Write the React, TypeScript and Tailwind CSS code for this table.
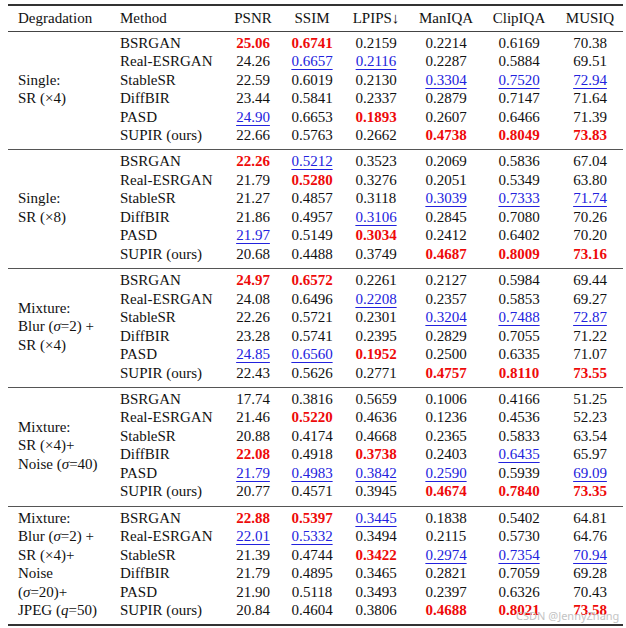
import React from "react";

type Cell = string; // suffix "r" = best (red bold), "b" = second (blue underline)

type Group = {
  label: string[];
  stacked?: boolean; // label lines sit beside each row instead of centred
  rows: [string, ...Cell[]][];
};

const groups: Group[] = [
  {
    label: ["Single:", "SR (×4)"],
    rows: [
      ["BSRGAN", "25.06r", "0.6741r", "0.2159", "0.2214", "0.6169", "70.38"],
      ["Real-ESRGAN", "24.26", "0.6657b", "0.2116b", "0.2287", "0.5884", "69.51"],
      ["StableSR", "22.59", "0.6019", "0.2130", "0.3304b", "0.7520b", "72.94b"],
      ["DiffBIR", "23.44", "0.5841", "0.2337", "0.2879", "0.7147", "71.64"],
      ["PASD", "24.90b", "0.6653", "0.1893r", "0.2607", "0.6466", "71.39"],
      ["SUPIR (ours)", "22.66", "0.5763", "0.2662", "0.4738r", "0.8049r", "73.83r"],
    ],
  },
  {
    label: ["Single:", "SR (×8)"],
    rows: [
      ["BSRGAN", "22.26r", "0.5212b", "0.3523", "0.2069", "0.5836", "67.04"],
      ["Real-ESRGAN", "21.79", "0.5280r", "0.3276", "0.2051", "0.5349", "63.80"],
      ["StableSR", "21.27", "0.4857", "0.3118", "0.3039b", "0.7333b", "71.74b"],
      ["DiffBIR", "21.86", "0.4957", "0.3106b", "0.2845", "0.7080", "70.26"],
      ["PASD", "21.97b", "0.5149", "0.3034r", "0.2412", "0.6402", "70.20"],
      ["SUPIR (ours)", "20.68", "0.4488", "0.3749", "0.4687r", "0.8009r", "73.16r"],
    ],
  },
  {
    label: ["Mixture:", "Blur (σ=2) +", "SR (×4)"],
    rows: [
      ["BSRGAN", "24.97r", "0.6572r", "0.2261", "0.2127", "0.5984", "69.44"],
      ["Real-ESRGAN", "24.08", "0.6496", "0.2208b", "0.2357", "0.5853", "69.27"],
      ["StableSR", "22.26", "0.5721", "0.2301", "0.3204b", "0.7488b", "72.87b"],
      ["DiffBIR", "23.28", "0.5741", "0.2395", "0.2829", "0.7055", "71.22"],
      ["PASD", "24.85b", "0.6560b", "0.1952r", "0.2500", "0.6335", "71.07"],
      ["SUPIR (ours)", "22.43", "0.5626", "0.2771", "0.4757r", "0.8110r", "73.55r"],
    ],
  },
  {
    label: ["Mixture:", "SR (×4)+", "Noise (σ=40)"],
    rows: [
      ["BSRGAN", "17.74", "0.3816", "0.5659", "0.1006", "0.4166", "51.25"],
      ["Real-ESRGAN", "21.46", "0.5220r", "0.4636", "0.1236", "0.4536", "52.23"],
      ["StableSR", "20.88", "0.4174", "0.4668", "0.2365", "0.5833", "63.54"],
      ["DiffBIR", "22.08r", "0.4918", "0.3738r", "0.2403", "0.6435b", "65.97"],
      ["PASD", "21.79b", "0.4983b", "0.3842b", "0.2590b", "0.5939", "69.09b"],
      ["SUPIR (ours)", "20.77", "0.4571", "0.3945", "0.4674r", "0.7840r", "73.35r"],
    ],
  },
  {
    label: ["Mixture:", "Blur (σ=2) +", "SR (×4)+", "Noise", "(σ=20)+", "JPEG (q=50)"],
    stacked: true,
    rows: [
      ["BSRGAN", "22.88r", "0.5397r", "0.3445b", "0.1838", "0.5402", "64.81"],
      ["Real-ESRGAN", "22.01b", "0.5332b", "0.3494", "0.2115", "0.5730", "64.76"],
      ["StableSR", "21.39", "0.4744", "0.3422r", "0.2974b", "0.7354b", "70.94b"],
      ["DiffBIR", "21.79", "0.4895", "0.3465", "0.2821", "0.7059", "69.28"],
      ["PASD", "21.90", "0.5118", "0.3493", "0.2397", "0.6326", "70.43"],
      ["SUPIR (ours)", "20.84", "0.4604", "0.3806", "0.4688r", "0.8021r", "73.58r"],
    ],
  },
];

const cols = "grid grid-cols-[102px_113px_60px_58px_70px_70px_76px_66px]";

// σ and q are set in italic, like math in the paper
function Label({ text }: { text: string }) {
  const parts = text.split(/(σ|q(?==))/);
  return (
    <>
      {parts.map((p, i) =>
        p === "σ" || p === "q" ? (
          <i key={i}>{p}</i>
        ) : (
          <span key={i}>{p}</span>
        )
      )}
    </>
  );
}

function Value({ v }: { v: string }) {
  const mark = v.slice(-1);
  if (mark === "r") return <span className="font-bold text-[#ee0a0a]">{v.slice(0, -1)}</span>;
  if (mark === "b")
    return (
      <span className="text-[#2222dd] underline decoration-1 underline-offset-[3px]">
        {v.slice(0, -1)}
      </span>
    );
  return <span>{v}</span>;
}

export default function App() {
  return (
    <div className="relative w-[626px] h-[628px] bg-white pt-[4px] pl-[8px] font-['Liberation_Serif','Times_New_Roman',serif] text-[15px] text-[#111]">
      <div className="w-[615px]">
        <div className="h-[1.5px] bg-[#333]" />
        <div className={`${cols} h-[25px] items-center`}>
          <div className="pl-[10px]">Degradation</div>
          <div className="pl-[10px]">Method</div>
          <div className="text-center">PSNR</div>
          <div className="text-center">SSIM</div>
          <div className="text-center">LPIPS↓</div>
          <div className="text-center">ManIQA</div>
          <div className="text-center">ClipIQA</div>
          <div className="text-center">MUSIQ</div>
        </div>

        {groups.map((g, gi) => (
          <div key={gi}>
            <div className={gi === 0 ? "h-px bg-[#444]" : "h-px bg-[#555]"} />
            <div className={`${cols} auto-rows-[18.5px] pt-[2px] pb-[4.8px] leading-[18.5px]`}>
              <div
                className={`row-span-6 pl-[10px] flex flex-col ${
                  g.stacked ? "justify-start" : "justify-center"
                }`}
              >
                {g.label.map((l) => (
                  <div key={l} className="h-[18.5px] whitespace-nowrap">
                    <Label text={l} />
                  </div>
                ))}
              </div>
              {g.rows.map((r) => (
                <React.Fragment key={r[0]}>
                  <div className="pl-[10px] whitespace-nowrap">{r[0]}</div>
                  {r.slice(1).map((v, i) => (
                    <div key={i} className="text-center">
                      <Value v={v} />
                    </div>
                  ))}
                </React.Fragment>
              ))}
            </div>
          </div>
        ))}
        <div className="h-[1.5px] bg-[#333]" />
      </div>

      <div className="absolute left-[516px] top-[609px] font-['Noto_Sans',sans-serif] text-[11px] leading-[14px] text-[#c4c4c4] whitespace-nowrap">
        CSDN @JennyZhang
      </div>
    </div>
  );
}
